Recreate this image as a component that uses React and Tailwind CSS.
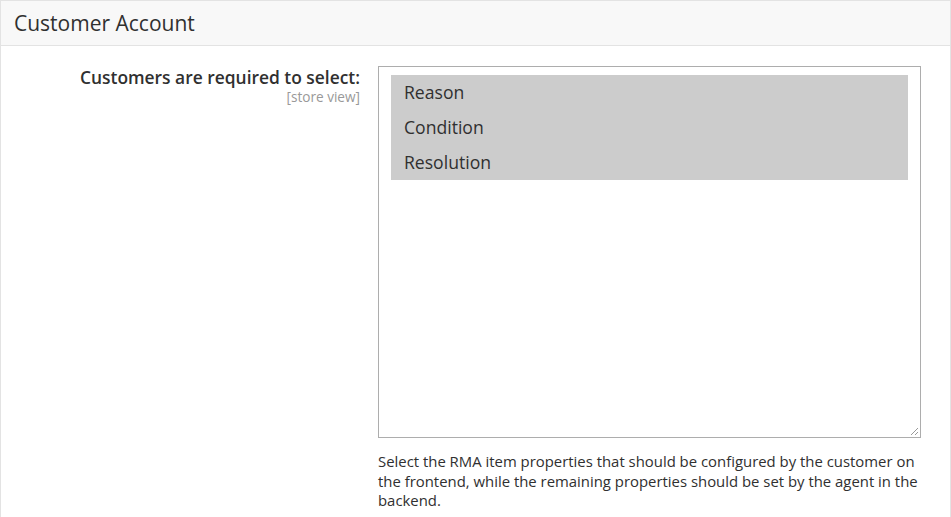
import React from 'react'

const options = ['Reason', 'Condition', 'Resolution']

function App() {
  return (
    <div className="w-[951px] h-[517px] overflow-hidden bg-white font-['Open_Sans',sans-serif] border-l border-r border-t border-[#e3e3e3]">
      {/* Section header */}
      <div className="h-[45px] bg-[#f8f8f8] border-b border-[#e3e3e3] pl-[13px] flex items-center">
        <h2 className="text-[21px] text-[#303030] leading-none">Customer Account</h2>
      </div>

      {/* Field row */}
      <div className="flex pt-[20px]">
        <div className="w-[359px] shrink-0 text-right">
          <div className="text-[17.4px] font-semibold text-[#303030] leading-[22px] whitespace-nowrap">Customers are required to select:</div>
          <div className="text-[13.6px] text-[#999] leading-[16px] mt-[1px]">[store view]</div>
        </div>

        <div className="ml-[18px] w-[543px]">
          <div className="relative h-[372px] border border-[#adadad] bg-white pt-[8px] px-[12px]">
            <div className="bg-[#cccccc]">
              {options.map((o) => (
                <div key={o} className="h-[35px] flex items-center pl-[13px] text-[17.6px] text-[#303030]">
                  {o}
                </div>
              ))}
            </div>
            {/* resize grip */}
            <svg className="absolute right-[1px] bottom-[1px]" width="9" height="9" viewBox="0 0 9 9">
              <line x1="8" y1="1" x2="1" y2="8" stroke="#999" strokeWidth="1" />
              <line x1="8" y1="5" x2="5" y2="8" stroke="#999" strokeWidth="1" />
            </svg>
          </div>
          <p className="mt-[14px] text-[14.9px] leading-[19.5px] text-[#303030]">
            Select the RMA item properties that should be configured by the customer on the frontend, while the remaining properties should be set by the agent in the backend.
          </p>
        </div>
      </div>
    </div>
  )
}

export default App
